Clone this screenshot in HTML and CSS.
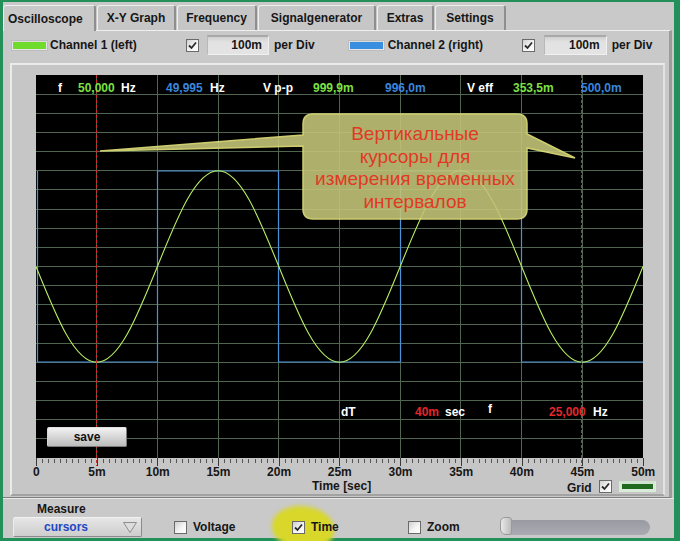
FILE: index.html
```html
<!DOCTYPE html>
<html>
<head>
<meta charset="utf-8">
<title>Oscilloscope</title>
<link rel="stylesheet" href="styles.css">
</head>
<body>
<div class="window">
  <div class="tabs">
    <div class="tab active t1">Oscilloscope</div>
    <div class="tab t2">X-Y Graph</div>
    <div class="tab t3">Frequency</div>
    <div class="tab t4">Signalgenerator</div>
    <div class="tab t5">Extras</div>
    <div class="tab t6">Settings</div>
  </div>
  <div class="panel">
    <div class="chrow">
      <span class="swatch sw-green"></span>
      <span class="chlabel">Channel 1 (left)</span>
      <span class="check on"><svg viewBox="0 0 11 11"><path d="M2 5.5 L4.5 8 L9 2.5"/></svg></span>
      <span class="numbox">100m</span>
      <span class="perdiv">per Div</span>
      <span class="swatch sw-blue"></span>
      <span class="chlabel ch2">Channel 2 (right)</span>
      <span class="check on"><svg viewBox="0 0 11 11"><path d="M2 5.5 L4.5 8 L9 2.5"/></svg></span>
      <span class="numbox nb2">100m</span>
      <span class="perdiv">per Div</span>
    </div>
    <div class="graph">
      <div class="plot">
        <svg class="scope" width="607" height="383" viewBox="0 0 607 383">
          <path class="grid" d="M60.5 0V383M121.5 0V383M182.5 0V383M242.5 0V383M303.5 0V383M364.5 0V383M424.5 0V383M485.5 0V383M546.5 0V383M0 19.5H607M0 38.5H607M0 57.5H607M0 76.5H607M0 95.5H607M0 114.5H607M0 134.5H607M0 153.5H607M0 172.5H607M0 191.5H607M0 210.5H607M0 229.5H607M0 249.5H607M0 268.5H607M0 287.5H607M0 306.5H607M0 325.5H607M0 344.5H607M0 363.5H607"/>
          <path class="sq" d="M1.5 96V287H121.5V96H242.5V287H364.5V96H485.5V287H607"/>
          <path class="sine" d="M0 191.5C20.29 241.78 38.64 287.25 60.7 287.25C82.76 287.25 101.11 241.78 121.4 191.5C141.69 141.22 160.04 95.75 182.1 95.75C204.16 95.75 222.51 141.22 242.8 191.5C263.09 241.78 281.44 287.25 303.5 287.25C325.56 287.25 343.91 241.78 364.2 191.5C384.49 141.22 402.84 95.75 424.9 95.75C446.96 95.75 465.31 141.22 485.6 191.5C505.89 241.78 524.24 287.25 546.3 287.25C568.36 287.25 586.71 241.78 607 191.5"/>
          <path class="cursor" d="M60.5 0V391M545.5 0V391"/>
          <g class="bubble">
            <path d="M277 39H481Q491 39 491 49V59L539 83L491 73V134Q491 144 481 144H277Q267 144 267 134V71L64 76L267 60V49Q267 39 277 39Z"/>
          </g>
        </svg>
        <div class="readouts rtop">
          <span class="w">f</span>
          <span class="g">50,000</span>
          <span class="w">Hz</span>
          <span class="b">49,995</span>
          <span class="w">Hz</span>
          <span class="w">V p-p</span>
          <span class="g">999,9m</span>
          <span class="b">996,0m</span>
          <span class="w">V eff</span>
          <span class="g">353,5m</span>
          <span class="b">500,0m</span>
        </div>
        <div class="readouts rbot">
          <span class="w">dT</span>
          <span class="r">40m</span>
          <span class="w">sec</span>
          <span class="w up">f</span>
          <span class="r">25,000</span>
          <span class="w">Hz</span>
        </div>
        <div class="callout">Вертикальные<br>курсоры для<br>измерения временных<br>интервалов</div>
        <div class="save">save</div>
      </div>
      <div class="ticks"></div>
      <div class="ticklabels">
        <span>0</span><span>5m</span><span>10m</span><span>15m</span><span>20m</span><span>25m</span><span>30m</span><span>35m</span><span>40m</span><span>45m</span><span>50m</span>
      </div>
      <div class="xfoot">
        <span class="xtitle">Time [sec]</span>
        <span class="gridlbl">Grid</span>
        <span class="check on"><svg viewBox="0 0 11 11"><path d="M2 5.5 L4.5 8 L9 2.5"/></svg></span>
        <span class="gridbar"></span>
      </div>
    </div>
  </div>
  <div class="measure">
    <div class="mlabel">Measure</div>
    <div class="mrow">
      <div class="dropdown">
        <span class="ddtext">cursors</span>
        <svg class="ddarrow" width="14" height="11" viewBox="0 0 14 11"><path d="M0.5 0.5H13.5L7 10.5Z"/></svg>
      </div>
      <div class="opt o1"><span class="check"></span><span>Voltage</span></div>
      <div class="opt o2 hl"><span class="check on"><svg viewBox="0 0 11 11"><path d="M2 5.5 L4.5 8 L9 2.5"/></svg></span><span>Time</span></div>
      <div class="opt o3"><span class="check"></span><span>Zoom</span></div>
      <div class="slider"><span class="thumb"></span></div>
    </div>
  </div>
</div>
</body>
</html>
```

FILE: styles.css
```css
* { box-sizing: border-box; }
html, body { margin: 0; padding: 0; }
body {
  width: 680px;
  height: 541px;
  overflow: hidden;
  background: #23905a;
  font-family: "Liberation Sans", Arial, sans-serif;
  font-weight: bold;
  font-size: 12px;
  color: #161616;
}
.window {
  margin: 2px 0 0 3px;
  width: 671px;
  height: 536px;
  background: #c9c9c9;
}

/* tabs */
.tabs {
  display: flex;
  align-items: flex-end;
  gap: 1px;
  height: 28px;
}
.tab {
  height: 25px;
  display: flex;
  align-items: center;
  justify-content: center;
  background: #c6c6c6;
  border-top: 1px solid #efefef;
  border-left: 1px solid #efefef;
  border-right: 2px solid #8e8e8e;
  border-radius: 3px 3px 0 0;
  font-size: 12px;
  line-height: 14px;
}
.tab.active { justify-content: flex-start; padding-left: 4px; background: #c9c9c9; height: 26px; margin-bottom: -1px; position: relative; }
.t1 { width: 93px; }
.t2 { width: 79px; }
.t3 { width: 80px; }
.t4 { width: 118px; }
.t5 { width: 57px; }
.t6 { width: 71px; }

/* panel */
.panel {
  width: 669px;
  height: 468px;
  border-top: 1px solid #efefef;
  border-right: 3px solid #9c9c9c;
  border-bottom: 1px solid #7e7e7e;
  padding-top: 4px;
}
.chrow {
  display: flex;
  align-items: center;
  height: 20px;
  padding-left: 9px;
}
.swatch {
  width: 35px;
  height: 9px;
  border: 1px solid #e6e6e6;
  border-top-color: #dcdcdc;
  outline: 1px solid #bdbdbd;
}
.sw-green { background: #6fdc2c; }
.sw-blue { background: #3a8ee0; margin-left: 34px; }
.chlabel { width: 139px; padding-left: 3px; line-height: 14px; }
.ch2 { width: 138px; padding-left: 4px; }
.check {
  width: 13px;
  height: 13px;
  flex: none;
  border: 1px solid #6a6a6a;
  background: linear-gradient(135deg, #cfcfcf 0%, #f4f4f4 55%, #ffffff 100%);
  display: inline-flex;
  align-items: center;
  justify-content: center;
}
.check svg { width: 11px; height: 11px; }
.check svg path { fill: none; stroke: #2a2a2a; stroke-width: 1.8; }
.numbox {
  width: 62px;
  height: 20px;
  margin-left: 8px;
  background: linear-gradient(#d0d0d0, #e2e2e2 30%, #e4e4e4);
  border-top: 2px solid #a9a9a9;
  border-left: 1px solid #b8b8b8;
  border-right: 1px solid #f0f0f0;
  border-bottom: 1px solid #f0f0f0;
  text-align: right;
  padding-right: 6px;
  font-size: 12px;
  line-height: 17px;
}
.nb2 { width: 63px; margin-left: 9px; }
.perdiv { margin-left: 5px; line-height: 14px; }

/* graph */
.graph {
  margin: 8px 0 0 7px;
  width: 655px;
  height: 433px;
  border-top: 2px solid #ebebeb;
  border-left: 2px solid #ebebeb;
  border-right: 2px solid #e2e2e2;
  border-bottom: 2px solid #a2a2a2;
  background: #c6c6c6;
}
.plot {
  position: relative;
  margin: 10px 0 0 24px;
  width: 607px;
  height: 383px;
  background: #000;
}
.scope { display: block; overflow: visible; }
.grid { stroke: #4f654f; stroke-width: 1; fill: none; shape-rendering: crispEdges; }
.sq { stroke: #4c92d8; stroke-width: 1.2; fill: none; }
.sine { stroke: #b8ef62; stroke-width: 1.1; fill: none; }
.cursor { stroke: #d42a2a; stroke-width: 1; stroke-dasharray: 3 2; fill: none; shape-rendering: crispEdges; }
.bubble { opacity: 0.9; }
.bubble path { fill: #c3c378; stroke: #e4e47c; stroke-width: 1.5; }

.readouts {
  position: absolute;
  left: 0;
  display: grid;
  line-height: 14px;
  font-size: 12px;
  white-space: nowrap;
}
.rtop {
  top: 6px;
  padding-left: 22px;
  grid-template-columns: 20px 43px 45px 44px 53px 50px 72px 82px 46px 68px auto;
}
.rbot {
  top: 330px;
  padding-left: 305px;
  grid-template-columns: 74px 30px 43px 61px 44px auto;
}
.w { color: #ffffff; }
.g { color: #7ee043; }
.b { color: #3c86dc; }
.r { color: #e4262a; }
.up { position: relative; top: -3px; }

.callout {
  position: absolute;
  left: 262px;
  top: 48px;
  width: 234px;
  text-align: center;
  font-weight: normal;
  font-size: 19px;
  line-height: 22.5px;
  color: #e03a26;
}
.save {
  position: absolute;
  left: 11px;
  top: 352px;
  width: 80px;
  height: 20px;
  background: linear-gradient(#f2f2f2, #d6d6d6 50%, #bcbcbc);
  border: 1px solid #7c7c7c;
  border-top-color: #e0e0e0;
  border-left-color: #d6d6d6;
  border-radius: 2px;
  text-align: center;
  line-height: 18px;
  color: #111;
}

.ticks {
  margin-left: 24px;
  width: 608px;
  height: 8px;
  background:
    repeating-linear-gradient(90deg, #3a3a3a 0 1px, transparent 1px 60.7px) 0 0 / 608px 8px no-repeat,
    repeating-linear-gradient(90deg, #555 0 1px, transparent 1px 6.07px) 0 1px / 608px 4px no-repeat;
}
.ticklabels {
  display: grid;
  grid-template-columns: repeat(11, 60.7px);
  margin-left: -6px;
  height: 13px;
  line-height: 13px;
  text-align: center;
}
.xfoot {
  display: flex;
  align-items: center;
  height: 15px;
}
.xtitle { margin-left: 300px; width: 255px; line-height: 14px; position: relative; top: -1px; }
.gridlbl { line-height: 14px; position: relative; top: 1px; }
.xfoot .check { margin-left: 7px; }
.gridbar {
  margin-left: 7px;
  width: 37px;
  height: 11px;
  border: 3px solid #d9ecd9;
  border-top-color: #cfe3cf;
  background: #1f6a1f;
}

/* measure */
.measure {
  height: 40px;
  border-top: 1px solid #e8e8e8;
  padding-top: 3px;
}
.mlabel { padding-left: 34px; line-height: 14px; height: 14px; }
.mrow {
  display: flex;
  align-items: center;
  height: 20px;
  margin-top: 1px;
  padding-left: 10px;
}
.dropdown {
  width: 129px;
  height: 20px;
  display: flex;
  align-items: center;
  justify-content: space-between;
  padding: 0 4px 0 30px;
  background: linear-gradient(#e6e6e6, #cdcdcd);
  border: 1px solid #8a8a8a;
  border-top-color: #f2f2f2;
  border-left-color: #ececec;
  border-radius: 2px;
}
.ddtext { color: #2346c4; line-height: 14px; }
.ddarrow path { fill: #dcdcdc; stroke: #8e8e8e; stroke-width: 1; }
.opt { display: flex; align-items: center; gap: 6px; line-height: 14px; }
.o1 { margin-left: 32px; width: 118px; }
.o2 { width: 116px; }
.o3 { width: 92px; }
.hl { position: relative; z-index: 0; }
.hl::before {
  content: "";
  position: absolute;
  left: -20px;
  top: -14px;
  width: 62px;
  height: 42px;
  border-radius: 45% 55% 38% 50%;
  background: #d8d72a;
  filter: blur(2px);
  z-index: -1;
}
.slider {
  position: relative;
  width: 150px;
  height: 15px;
  background: linear-gradient(#9a9aa2, #aaaab2);
  border-radius: 8px;
}
.thumb {
  position: absolute;
  left: 0;
  top: -3px;
  width: 12px;
  height: 18px;
  background: linear-gradient(90deg, #e8e8e8, #bcbcbc);
  border: 1px solid #9a9a9a;
  border-radius: 5px 3px 3px 6px;
}
```
